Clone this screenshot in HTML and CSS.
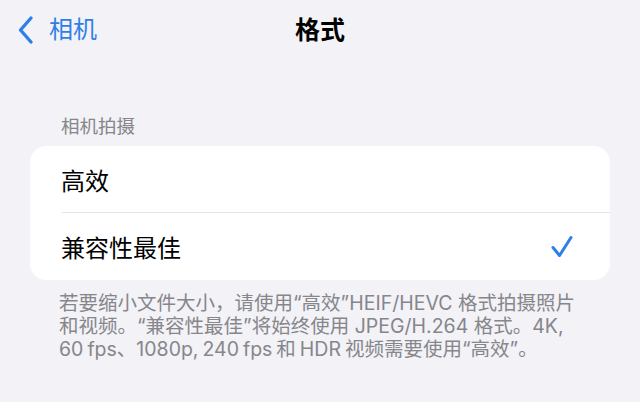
FILE: index.html
```html
<!DOCTYPE html>
<html lang="zh-CN">
<head>
<meta charset="utf-8">
<link rel="stylesheet" href="styles.css">
</head>
<body>
<div class="screen">
  <header class="nav">
    <div class="back">
      <svg class="chev" width="16" height="30" viewBox="0 0 16 30"><polyline points="13,3 2.5,15 13,27" fill="none" stroke="#2f7fe8" stroke-width="3.4" stroke-linecap="round" stroke-linejoin="round"/></svg>
      <span class="back-label">相机</span>
    </div>
    <div class="title">格式</div>
    <div></div>
  </header>
  <div class="group-label">相机拍摄</div>
  <div class="card">
    <div class="row"><span>高效</span></div>
    <div class="sep"></div>
    <div class="row"><span>兼容性最佳</span>
      <svg class="check" width="24" height="24" viewBox="0 0 24 24"><polyline points="3,12.5 9.5,20.5 21,2.5" fill="none" stroke="#2f7fe8" stroke-width="3" stroke-linecap="round" stroke-linejoin="round"/></svg>
    </div>
  </div>
  <p class="footer">若要缩小文件大小，请使用“高效”HEIF/HEVC 格式拍摄照片<br>和视频。“兼容性最佳”将始终使用 JPEG/H.264 格式。4K,<br><span class="tight">60 fps、1080p, 240 fps 和 HDR 视频需要使用“高效”。</span></p>
</div>
</body>
</html>
```
FILE: styles.css
```css
html, body {
  margin: 0;
  padding: 0;
  background: #f2f2f7;
}
.screen {
  width: 640px;
  height: 402px;
  overflow: hidden;
  font-family: "Inter", "Noto Sans CJK SC", sans-serif;
  color: #000;
}
.nav {
  height: 60px;
  display: grid;
  grid-template-columns: 1fr auto 1fr;
  align-items: center;
}
.back {
  display: flex;
  align-items: center;
  padding-left: 18px;
  gap: 15px;
  color: #2f7fe8;
}
.back-label {
  font-size: 24px;
  line-height: 30px;
}
.title {
  font-size: 25px;
  font-weight: 700;
  line-height: 30px;
}
.group-label {
  margin: 54px 0 8px 61px;
  font-size: 18.5px;
  line-height: 24px;
  color: #86868b;
}
.card {
  margin: 0 30px;
  background: #fff;
  border-radius: 16px;
}
.row {
  height: 66px;
  display: flex;
  align-items: center;
  justify-content: space-between;
  padding: 0 36px 0 31px;
  font-size: 24px;
}
.row + .sep + .row { height: 67px; }
.sep {
  height: 1px;
  margin-left: 32px;
  background: #e3e3e8;
}
.check { margin-top: 1px; }
.footer {
  margin: 12px 0 0 59px;
  font-size: 19.5px;
  line-height: 23px;
  color: #86868b;
}
.tight { word-spacing: -1.5px; }
```
